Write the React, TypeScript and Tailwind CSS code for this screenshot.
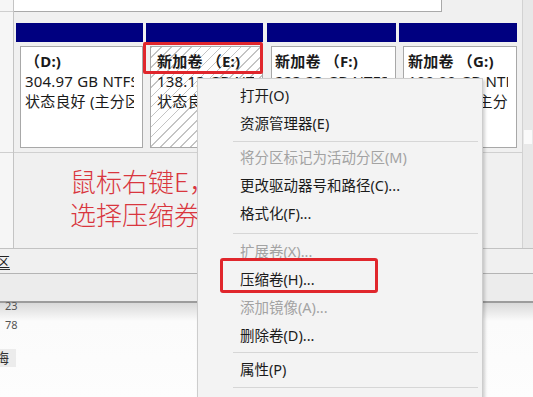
const font = "font-['Noto_Sans','Noto_Sans_CJK_SC',sans-serif]"

type Part = { label: string; size: string; state: string; hatched?: boolean; w: string; gap: string; pad: string }

const PARTS: Part[] = [
  { label: '（D:)', size: '304.97 GB NTFS', state: '状态良好 (主分区)', w: 'w-[127px]', gap: 'ml-0', pad: 'pl-[4px]' },
  { label: '新加卷 （E:)', size: '138.13 GB NTFS', state: '状态良好 (主分区)', hatched: true, w: 'w-[117px]', gap: 'ml-[3px]', pad: 'pl-[6px]' },
  { label: '新加卷 （F:)', size: '223.23 GB NTFS', state: '状态良好 (主分区)', w: 'w-[129px]', gap: 'ml-[4px]', pad: 'pl-[3px]' },
  { label: '新加卷 （G:)', size: '100.00 GB NTFS', state: '状态良好 (主分区)', w: 'w-[118px]', gap: 'ml-[3px]', pad: 'pl-[4px]' },
]

type Item = { text: string; disabled?: boolean } | { sep: string }

const MENU: Item[] = [
  { text: '打开(O)' },
  { text: '资源管理器(E)' },
  { sep: 'mt-[3px] mb-[2px]' },
  { text: '将分区标记为活动分区(M)', disabled: true },
  { text: '更改驱动器号和路径(C)...' },
  { text: '格式化(F)...' },
  { sep: 'mt-[5px] mb-[4px]' },
  { text: '扩展卷(X)...', disabled: true },
  { text: '压缩卷(H)...' },
  { text: '添加镜像(A)...', disabled: true },
  { text: '删除卷(D)...' },
  { sep: 'mt-[2px] mb-[3px]' },
  { text: '属性(P)' },
  { sep: 'mt-[3px] mb-[3px]' },
]

function PartitionColumn({ p }: { p: Part }) {
  return (
    <div className={`${p.w} ${p.gap} flex flex-col shrink-0`}>
      <div className="h-[19px] bg-[#000080]" />
      <div
        className={`ml-[4px] mt-[4px] h-[102px] border border-[#a8a8a8] pt-[4px] ${p.pad} ${
          p.hatched
            ? 'bg-[repeating-linear-gradient(135deg,#c4c4c4_0px,#c4c4c4_1px,#ffffff_1px,#ffffff_7px)]'
            : 'bg-white'
        }`}
      >
        <div className="mr-[8px] overflow-hidden whitespace-nowrap text-[15px] tracking-[0.2px] leading-[20px] text-[#1a1a1a]">
          <div className="font-bold">{p.label}</div>
          <div>{p.size}</div>
          <div>{p.state}</div>
        </div>
      </div>
    </div>
  )
}

export default function App() {
  return (
    <div className={`relative w-[533px] h-[397px] overflow-hidden bg-[#f0f0f0] ${font}`}>
      {/* upper pane */}
      <div className="flex h-[249px] border-b border-[#c2c2c2]">
        <div className="w-[14px] flex flex-col border-r border-[#c4c4c4] bg-[#f6f6f6]">
          <div className="h-[12px] border-b border-[#cfcfcf]" />
          <div className="h-[141px] border-b border-[#cfcfcf]" />
          <div className="flex-1" />
        </div>

        <div className="w-[508px] flex flex-col">
          <div className="h-[12px] flex">
            <div className="w-[428px] bg-white border-b border-r border-[#a9a9a9]" />
          </div>
          <div className="h-[141px] border-b border-[#d0d0d0] pt-[11px] pl-[2px] flex">
            {PARTS.map((p, i) => (
              <PartitionColumn key={i} p={p} />
            ))}
          </div>
          <div className="flex-1" />
        </div>

        <div className="w-[11px] border-l border-[#d2d2d2] bg-[#e8e8e8] flex flex-col">
          <div className="mt-[130px] mx-[1px] h-[14px] bg-[#fafafa]" />
        </div>
      </div>

      {/* tabs / status rows */}
      <div className="h-[25px] border-b border-[#b4b4b4] flex items-center overflow-hidden">
        <span className="ml-[-18px] text-[14px] text-[#222] underline underline-offset-2 decoration-[#333]">分区</span>
      </div>
      <div className="h-[29px] bg-[#ececec] border-b-2 border-[#9c9c9c]" />
      <div className="h-[95px] bg-[linear-gradient(#d9d9d9,#fbfbfb_18px,#fdfdfd)] flex flex-col text-[11px] leading-[12px] text-[#555]">
        <span className="ml-[5px] mt-[-3px]">23</span>
        <span className="ml-[5px] mt-[7px]">78</span>
        <span className="mt-[18px] w-[16px] overflow-hidden bg-[#ececec] text-[14px] leading-[18px] text-[#333] whitespace-nowrap">
          <span className="ml-[-5px]">晦</span>
        </span>
      </div>

      {/* red highlight on partition E */}
      <div className="absolute left-[143px] top-[42px] w-[120px] h-[32px] border-[3px] border-[#e0262c] rounded-[2px]" />

      {/* annotation */}
      <div className="absolute left-[70px] top-[164px] text-[26px] leading-[33px] text-[#d9363e] font-['Noto_Sans_CJK_SC',sans-serif] font-light">
        <div>鼠标右键E，</div>
        <div>选择压缩券</div>
      </div>

      {/* context menu */}
      <div className="absolute left-[197px] top-[78px] w-[286px] h-[330px] bg-[#f3f3f3] border border-[#cdcdcd] shadow-[2px_2px_3px_rgba(0,0,0,0.18)] pt-[3px] text-[14.5px]">
        {MENU.map((it, i) =>
          'sep' in it ? (
            <div key={i} className={`${it.sep} ml-[35px] mr-[4px] h-px bg-[#d6d6d6]`} />
          ) : (
            <div
              key={i}
              className={`h-[28px] flex items-center pl-[42px] ${it.disabled ? 'text-[#a3a3a3]' : 'text-[#1b1b1b]'}`}
            >
              {it.text}
            </div>
          ),
        )}
      </div>

      {/* red highlight on 压缩卷 */}
      <div className="absolute left-[220px] top-[258px] w-[158px] h-[35px] border-[3px] border-[#e0262c] rounded-[3px]" />
    </div>
  )
}
